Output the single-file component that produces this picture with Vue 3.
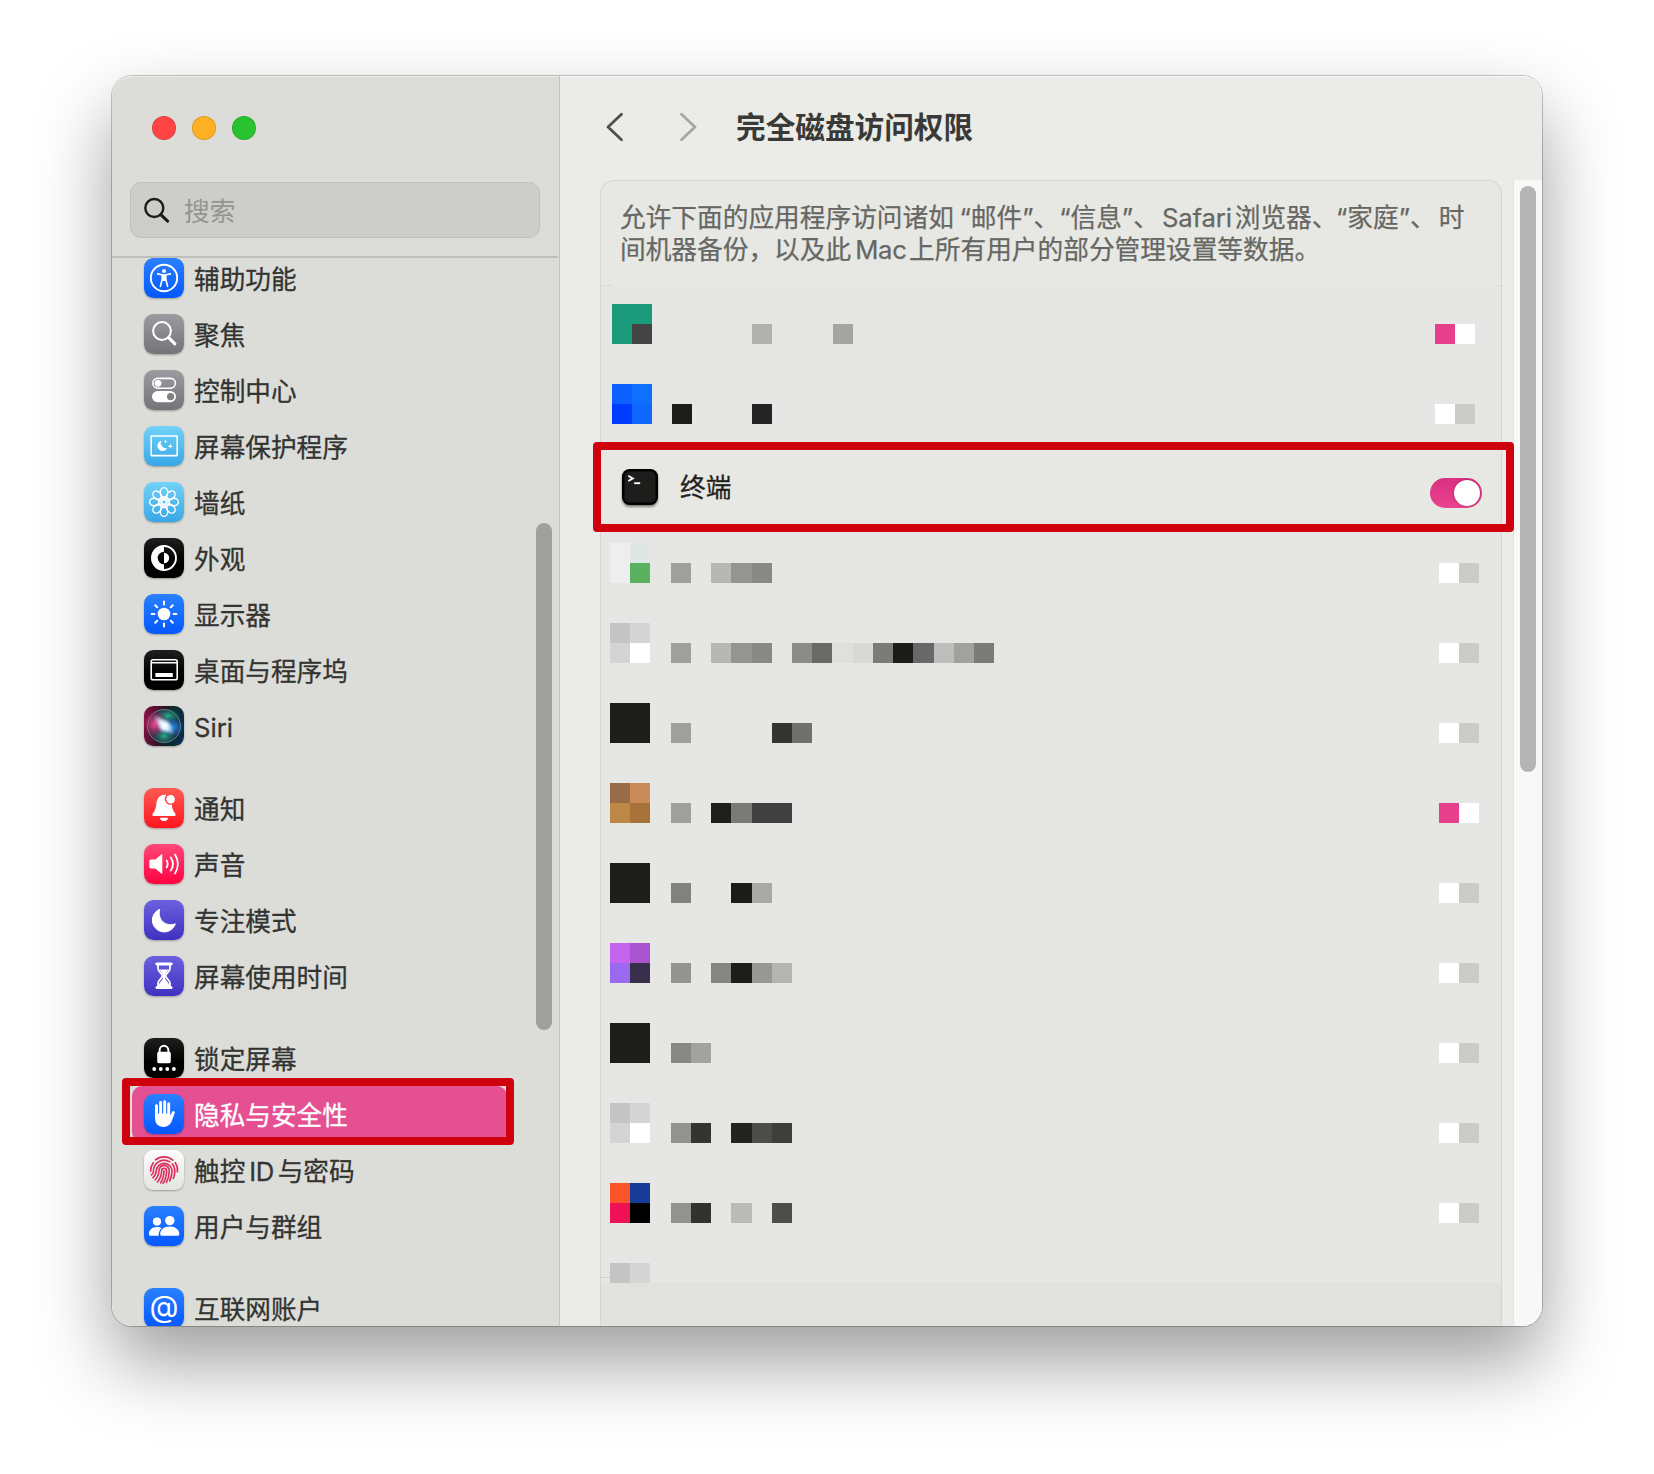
<script setup>
const W = 'fill="#fff"'
const S = 'fill="none" stroke="#fff" stroke-linecap="round" stroke-linejoin="round"'

const petals = Array.from({ length: 8 }, (_, i) =>
  `<ellipse cx="20" cy="10.2" rx="3.7" ry="4.6" transform="rotate(${i * 45} 20 20)"/><path d="M20 17.4 17.2 13.4M20 17.4l2.8-4" transform="rotate(${i * 45} 20 20)"/>`
).join('')

const rays = Array.from({ length: 8 }, (_, i) =>
  `<path d="M20 7.6v2.8" transform="rotate(${i * 45} 20 20)"/>`
).join('')

const glyphs = {
  access: `<circle cx="20" cy="20" r="13.2" ${S} stroke-width="1.9"/><circle cx="20" cy="12.9" r="2" ${W}/><path d="M13.6 15.9l4.7.9v4l-1.900 7.600M26.400 15.900l-4.700.9v4l1.900 7.600" ${S} stroke-width="1.6"/><path d="M17.600 16.300h4.800l-.2 5.200-1 1.600h-2.400l-1-1.600z" ${W}/>`,
  spotlight: `<circle cx="18" cy="17" r="8.9" ${S} stroke-width="2"/><path d="M24.6 23.6l6.3 6.3" ${S} stroke-width="3"/>`,
  control: `<rect x="8.8" y="8.4" width="22.6" height="9.8" rx="4.9" ${S} stroke-width="1.6"/><circle cx="14" cy="13.3" r="3.4" ${W}/><rect x="8" y="21" width="24" height="11.2" rx="5.6" ${W}/><circle cx="26.6" cy="26.6" r="3.6" fill="#808085"/>`,
  saver: `<rect x="7.2" y="10" width="26" height="19.6" ${S} stroke-width="1.6"/><path d="M17.2 14.8a5.2 5.2 0 1 0 6 7.4 5.4 5.4 0 0 1-6-7.4z" ${W}/><path d="M21.5 13.4l.5 1.6 1.6.5-1.6.5-.5 1.6-.5-1.6-1.6-.5 1.6-.5zM26.4 17.6l.7 2 2 .7-2 .7-.7 2-.7-2-2-.7 2-.7z" ${W}/>`,
  wallpaper: `<g ${S} stroke-width="1.4">${petals}<circle cx="20" cy="20" r="2.2"/></g>`,
  look: `<circle cx="20" cy="20" r="12" ${S} stroke-width="1.9"/><path d="M20 7.5a12.5 12.5 0 0 0 0 25v-6.2a6.3 6.3 0 0 1 0-12.6z" ${W}/><path d="M20 14.8a5.2 5.2 0 0 1 0 10.4z" ${W}/>`,
  display: `<circle cx="20" cy="20" r="6.3" ${W}/><g ${S} stroke-width="2">${rays}</g>`,
  dock: `<rect x="7.2" y="9.8" width="26" height="20" rx="1.8" ${S} stroke-width="1.6"/><path d="M7.4 12.8h25.6" stroke="#fff" stroke-width="1.5"/><rect x="11.4" y="23" width="17.4" height="4" rx=".6" ${W}/>`,
  siri: '',
  bell: `<path d="M22.6 6.9a5.7 5.7 0 0 0 5.2 9.7c.4 4 .9 5.8 3.1 8.3 1.4 1.7 1 3.1-.9 3.1H10c-1.9 0-2.3-1.4-.9-3.1 2.500-3 2.900-5.300 3.300-9.300.5-5 3.400-8.900 7.600-8.900z" ${W}/><circle cx="26.6" cy="11.3" r="4.3" ${W}/><path d="M15.8 29.7h8.4c-.5 2.2-2 3.4-4.2 3.400s-3.700-1.200-4.200-3.400z" ${W}/>`,
  sound: `<path d="M7 15.6h4.3l6-5.2c.5-.4 1-.2 1 .5v18.2c0 .7-.5.9-1 .5l-6-5.200H7c-1 0-1.700-.6-1.700-1.600v-5.600c0-1 .7-1.600 1.700-1.600z" ${W}/><path d="M22.6 16.400a7 7 0 0 1 0 7.200M26.800 13.400a12 12 0 0 1 0 13.200M31 10.600a17 17 0 0 1 0 18.800" ${S} stroke-width="1.8"/>`,
  moon: `<path d="M15.8 9.2a11.8 11.8 0 1 0 15.6 14.600c-9.600 3.600-18.600-4.400-15.600-14.600z" ${W} stroke="#fff" stroke-linejoin="round"/>`,
  hourglass: `<path d="M12.800 8h14.400M12.800 31.600h14.400" ${S} stroke-width="2.8"/><path d="M14 9v3.200c0 3.600 4.400 5.200 4.400 7.600s-4.400 4-4.400 7.600v3.400M26 9v3.200c0 3.600-4.400 5.200-4.400 7.600s4.400 4 4.400 7.600v3.400" ${S} stroke-width="1.8"/><path d="M15.600 13.600h8.800l-3.200 5v4.200l3.600 5 .6 3H14.600l.6-3 3.600-5v-4.200z" ${W}/>`,
  lock: `<rect x="13.2" y="13.8" width="13.6" height="11.4" rx="1.8" ${W}/><path d="M15.600 14.600v-2.400a4.400 4.400 0 0 1 8.800 0v2.400" ${S} stroke-width="2"/><g ${W}><circle cx="10.2" cy="31" r="1.9"/><circle cx="16.8" cy="31" r="1.9"/><circle cx="23.3" cy="31" r="1.9"/><circle cx="29.9" cy="31" r="1.9"/></g>`,
  hand: `<g ${S} stroke-width="2.9"><path d="M12.500 11.600v12M16.600 8.400v14M20.700 7.800v14M24.700 9.800v14M29.400 18.600l-3.200 6.600"/></g><path d="M11.050 19.500h15.100v2.300l2.300-2.100 1.600.8c-1.800 4.500-2.700 12.400-10.300 12.400-5.800 0-8.700-3.500-8.700-9z" ${W}/>`,
  touch: `<g fill="none" stroke="#dc2f5e" stroke-width="1.65" stroke-linecap="round"><path d="M11.500 9.900a13.500 13.500 0 0 1 17.400.3M31.200 12.600a13.500 13.500 0 0 1 2.200 9.200M6.600 21.300c-.1-3.200.9-6.200 2.700-8.600M9.400 21.600a10.700 10.700 0 0 1 16.400-9.700M28.300 13.900c3.400 4.100 3 9.600 1.100 14.500M7.300 24.900c1.300-.7 1.900-1.800 2.100-3.300M12.200 20.800a8 8 0 0 1 15.900-.5c0 3.800-.8 7.200-2.400 10.500M8.900 27.800c2.200-1.800 3.200-4 3.300-7M14.900 20.800a5.200 5.200 0 0 1 10.400-.4c0 4.300-.9 8.200-2.900 12M11 30c2.600-2.500 3.800-5.400 3.900-9.200M13.500 32c2.800-3.400 4.100-7 4.100-11.300a2.500 2.500 0 0 1 5 0c0 4.500-1.100 8.700-3.500 12.600M20 20.800c0 4.600-1.100 8.500-3.300 12"/></g>`,
  users: `<g ${W}><circle cx="13" cy="15.6" r="4.1"/><path d="M5 27.700c0-4 3.200-6.800 8-6.800 2 0 3.500.4 4.800 1.200-2 1.600-3.100 3.500-3.200 7.700H6.500c-1 0-1.500-.8-1.500-2.100z"/><circle cx="25.8" cy="14.6" r="4.7"/><path d="M16.200 27.800c0-4 3.600-7.300 9.500-7.300s9.600 3.300 9.600 7.300c0 1.400-.6 2-1.700 2H17.900c-1.100 0-1.700-.6-1.700-2z"/></g>`,
  at: ''
}

const groups = [
  [
    ['access', '辅助功能'], ['spotlight', '聚焦'], ['control', '控制中心'], ['saver', '屏幕保护程序'],
    ['wallpaper', '墙纸'], ['look', '外观'], ['display', '显示器'], ['dock', '桌面与程序坞'], ['siri', 'Siri']
  ],
  [['bell', '通知'], ['sound', '声音'], ['moon', '专注模式'], ['hourglass', '屏幕使用时间']],
  [['lock', '锁定屏幕'], ['hand', '隐私与安全性'], ['touch', '触控', 'ID', '与密码'], ['users', '用户与群组']],
  [['at', '互联网账户']]
]

const N = null
const on = ['#e63f8b', '#ffffff']
const off = ['#ffffff', '#cbccc8']
const solid = (c) => [c, c, c, c]
const pale = ['#c4c4c4', '#d5d5d5', '#d4d4d4', '#ffffff']

const upper = [
  { icon: ['#1a9b79', '#1a9b79', '#1a9b79', '#434545'], name: [N, N, N, N, '#b1b1b0', N, N, N, '#a4a4a3'], sw: on },
  { icon: ['#0c60ff', '#0f70ff', '#003cff', '#0f68ff'], name: ['#1c1c1b', N, N, N, '#242424'], sw: off }
]
const lower = [
  { icon: ['#eeeeee', '#e0e5e6', '#eeeeee', '#5ab25e'], name: ['#9f9f9d', N, '#b7b7b5', '#949492', '#888886'], sw: off },
  { icon: pale, name: ['#9f9f9d', N, '#b7b7b5', '#949492', '#888886', N, '#8b8b89', '#696968', '#dfe0dc', '#d8d9d4', '#7b7b7a', '#1b1b1a', '#686868', '#bdbdbb', '#a1a1a0', '#7b7b7a'], sw: off },
  { icon: solid('#1d1d1c'), name: ['#9f9f9d', N, N, N, N, '#343433', '#70706f'], sw: off },
  { icon: ['#996b47', '#cb8b58', '#bb8945', '#a87338'], name: ['#9f9f9d', N, '#1e1e1d', '#7a7a79', '#404040', '#404040'], sw: on },
  { icon: solid('#1d1d1c'), name: ['#81817f', N, N, '#1b1b1a', '#a9a9a7'], sw: off },
  { icon: ['#c464ee', '#ab54d0', '#9b68f0', '#38304b'], name: ['#939391', N, '#858583', '#1c1c1b', '#979796', '#b4b5b0'], sw: off },
  { icon: solid('#1d1d1c'), name: ['#878786', '#a2a2a1'], sw: off },
  { icon: pale, name: ['#929291', '#343433', N, '#232322', '#4c4c4b', '#3e3e3d'], sw: off },
  { icon: ['#fa5526', '#143c98', '#ee1156', '#000000'], name: ['#929291', '#323231', N, '#babbb6', N, '#4d4d4c'], sw: off },
  { icon: pale, name: [], sw: [] }
]
</script>

<template>
  <div class="desktop">
    <div class="window">
      <aside class="sidebar">
        <div class="lights"><i class="red"></i><i class="amber"></i><i class="green"></i></div>
        <div class="search">
          <svg width="28" height="28" viewBox="0 0 28 28" fill="none" stroke="#1b1b1a" stroke-width="2.4" stroke-linecap="round">
            <circle cx="12.3" cy="12" r="9" /><path d="M19 18.8l6.6 6.4" stroke-width="3" />
          </svg>
          <span>搜索</span>
        </div>
        <nav class="nav">
          <ul v-for="(g, gi) in groups" :key="gi" class="group">
            <li v-for="item in g" :key="item[0]" class="item" :class="{ selected: item[0] === 'hand' }">
              <span class="tile" :class="item[0]">
                <span v-if="item[0] === 'at'" class="at-sign">@</span>
                <svg v-else-if="item[0] === 'siri'" width="40" height="40" viewBox="0 0 40 40">
                  <defs>
                    <radialGradient id="glow"><stop offset="0" stop-color="#fff" /><stop offset=".3" stop-color="#eef8ff" stop-opacity=".95" /><stop offset="1" stop-color="#bcd8ff" stop-opacity="0" /></radialGradient>
                    <radialGradient id="pink"><stop offset="0" stop-color="#f0508c" /><stop offset="1" stop-color="#c01a60" stop-opacity="0" /></radialGradient>
                    <radialGradient id="blue"><stop offset="0" stop-color="#2d9cf0" /><stop offset="1" stop-color="#1560c8" stop-opacity="0" /></radialGradient>
                    <radialGradient id="teal"><stop offset="0" stop-color="#25b08c" /><stop offset="1" stop-color="#157a66" stop-opacity="0" /></radialGradient>
                  </defs>
                  <circle cx="20" cy="20" r="16.5" fill="#2a3a58" fill-opacity=".7" stroke="#6f9ba6" stroke-opacity=".8" stroke-width="1" />
                  <ellipse cx="24" cy="10" rx="13" ry="8" fill="url(#teal)" />
                  <ellipse cx="11" cy="18" rx="13" ry="14" fill="url(#pink)" />
                  <ellipse cx="28" cy="21" rx="12" ry="10" fill="url(#blue)" />
                  <ellipse cx="20" cy="30" rx="11" ry="8" fill="url(#teal)" />
                  <ellipse cx="20" cy="19" rx="14" ry="5.5" transform="rotate(42 20 19)" fill="url(#glow)" />
                  <circle cx="20.5" cy="20" r="8" fill="url(#glow)" />
                </svg>
                <svg v-else width="40" height="40" viewBox="0 0 40 40" v-html="glyphs[item[0]]"></svg>
              </span>
              <span class="label">{{ item[1] }}<span v-if="item[2]" class="latin">{{ item[2] }}</span>{{ item[3] }}</span>
            </li>
          </ul>
        </nav>
        <div class="side-thumb"></div>
        <div class="mark mark-side"></div>
      </aside>

      <main class="main">
        <header class="bar">
          <svg width="20" height="32" viewBox="0 0 20 32" fill="none" stroke="#50504e" stroke-width="2.8" stroke-linecap="round" stroke-linejoin="round"><path d="M16.500 3.200L3 16l13.500 12.800" /></svg>
          <svg class="fwd" width="20" height="32" viewBox="0 0 20 32" fill="none" stroke="#a6a6a3" stroke-width="2.8" stroke-linecap="round" stroke-linejoin="round"><path d="M3.500 3.200L17 16 3.500 28.800" /></svg>
          <h1>完全磁盘访问权限</h1>
        </header>
        <div class="body">
          <section class="card">
            <p class="intro">
              <span class="line">允许下面的应用程序访问诸如<q class="gap">“</q>邮件<q>”</q>、<q>“</q>信息<q>”</q>、<b class="safari">Safari</b>浏览器、<q class="tight">“</q>家庭<q>”</q>、<span class="wide">时</span></span>
              <span class="line">间机器备份，以及此<b>Mac</b>上所有用户的部分管理设置等数据。</span>
            </p>
            <div class="list">
              <div v-for="(r, i) in upper" :key="'u' + i" class="row upper">
                <div class="quad"><i v-for="(c, k) in r.icon" :key="k" :style="{ background: c }"></i></div>
                <div class="strip"><i v-for="(c, k) in r.name" :key="k" :style="{ background: c || 'transparent' }"></i></div>
                <div class="strip end"><i v-for="(c, k) in r.sw" :key="k" :style="{ background: c }"></i></div>
              </div>
              <div class="terminal">
                <svg class="term-icon" width="36" height="36" viewBox="0 0 36 36"><rect width="36" height="36" rx="7.5" fill="#000" /><rect x="2.5" y="2.5" width="31" height="31" rx="5" fill="#1d1d1c" /><path d="M6.300 6.800l4.600 2.600-4.600 2.600" fill="none" stroke="#fff" stroke-width="1.8" /><path d="M12.200 14.200h6" stroke="#fff" stroke-width="1.9" /></svg>
                <span class="term-name">终端</span>
                <span class="toggle"><i></i></span>
                <div class="mark mark-row"></div>
              </div>
              <div v-for="(r, i) in lower" :key="'l' + i" class="row">
                <div class="quad"><i v-for="(c, k) in r.icon" :key="k" :style="{ background: c }"></i></div>
                <div class="strip"><i v-for="(c, k) in r.name" :key="k" :style="{ background: c || 'transparent' }"></i></div>
                <div class="strip end"><i v-for="(c, k) in r.sw" :key="k" :style="{ background: c }"></i></div>
              </div>
            </div>
            <div class="foot"></div>
          </section>
          <div class="track"><div class="thumb"></div></div>
        </div>
      </main>
    </div>
  </div>
</template>

<style>
body { margin: 0; background: #fff; }
</style>

<style scoped>
* { box-sizing: border-box; }
.desktop {
  width: 1654px; height: 1474px; padding: 76px 112px 0; overflow: hidden; background: #fff;
  font-family: Inter, "Noto Sans CJK SC", sans-serif; font-size: 25.65px; color: #333431;
}
.window {
  display: flex; width: 1430px; height: 1250px; border-radius: 20px; position: relative;
  box-shadow: 0 0 0 1px rgba(0, 0, 0, .22), 0 36px 76px rgba(0, 0, 0, .39);
}
.sidebar {
  position: relative; width: 448px; height: 1250px; background: #dcddd8; border-right: 1px solid #c3c4bf;
  border-radius: 20px 0 0 20px; display: flex; flex-direction: column; flex: none;
  box-shadow: inset 0 1px 0 #f0f0ed;
}
.lights { display: flex; gap: 16px; padding: 40px 0 0 40px; height: 106px; flex: none; }
.lights i { width: 24px; height: 24px; border-radius: 50%; border: 1px solid rgba(0, 0, 0, .12); }
.red { background: #ff4645; }
.amber { background: #ffb024; }
.green { background: #2ac231; }
.search {
  margin-left: 18px; width: 410px; height: 56px; border-radius: 11px; background: #cdcec9; border: 1px solid #c0c1bc;
  display: flex; align-items: center; padding: 0 0 1px 11px; gap: 14px; color: #94958f; flex: none;
}
.nav { margin-top: 18px; border-top: 2px solid #bebfba; flex: 1; min-height: 0; overflow: hidden; border-bottom-left-radius: 20px; width: 446px; }
.group { list-style: none; margin: 0 0 26px; padding: 0 0 0 20px; }
.item { display: flex; align-items: center; height: 56px; width: 375px; padding-left: 12px; gap: 10px; border-radius: 10px; }
.group:first-child { margin-top: -8px; }
.item.selected { background: #e55093; color: #fff; }
.label { white-space: nowrap; line-height: 38px; padding-top: 3px; -webkit-text-stroke: .3px currentColor; }
.latin { margin: 0 4px; letter-spacing: -.5px; }
.tile { width: 40px; height: 40px; border-radius: 9.5px; flex: none; overflow: hidden; display: block; box-shadow: 0 1px 2px rgba(0, 0, 0, .3); }
.tile svg { display: block; }
.access, .display, .hand, .users, .at { background: linear-gradient(#2a80ff, #0458ff); }
.spotlight, .control { background: linear-gradient(#9c9ca0, #737378); }
.saver, .wallpaper { background: linear-gradient(#72d2f8, #38a7e6); }
.look, .dock, .lock { background: linear-gradient(#1e1e1e, #000 60%); }
.siri { background: linear-gradient(100deg, #8c0f42, #2a1426 45%, #0b2a28 65%, #0a2c55); }
.bell { background: linear-gradient(#ff5a52, #ff1520); }
.sound { background: linear-gradient(#ff4878, #ff0340); }
.moon, .hourglass { background: linear-gradient(#6a60de, #4032c0); }
.touch { background: linear-gradient(#fdfdfd, #e4e4e2); }
.at-sign { display: block; color: #fff; font-size: 30px; line-height: 36px; text-align: center; margin: 0 -4px; }
.side-thumb { position: absolute; left: 424px; top: 447px; width: 16px; height: 507px; border-radius: 8px; background: #a0a19d; }
.mark { position: absolute; border: 8px solid #d0010f; border-radius: 4px; z-index: 3; }
.mark-side { left: 10px; top: 1002px; width: 392px; height: 67px; }

.main { flex: 1; display: flex; flex-direction: column; background: #ebece7; border-radius: 0 20px 20px 0; min-width: 0; box-shadow: inset 0 1px 0 #fafaf8; }
.bar { height: 104px; flex: none; display: flex; align-items: center; padding: 0 0 2px 45px; }
.fwd { margin-left: 53px; }
.bar h1 { margin: 0 0 0 38px; font-size: 29.65px; line-height: 40px; font-weight: 700; color: #393a37; }
.body { flex: 1; display: flex; min-height: 0; padding-left: 40px; }
.card { width: 902px; border: 1px solid #d5d6d2; border-bottom: 0; border-radius: 14px 14px 0 0; background: #e7e8e3; display: flex; flex-direction: column; }
.intro { margin: 0; padding: 20.5px 0 0 19px; height: 104px; flex: none; color: #666763; font-size: 25.7px; -webkit-text-stroke: .25px currentColor; }
.line { display: block; white-space: nowrap; line-height: 32.5px; height: 32.5px; }
.line b { font-weight: 400; margin: 0 2.5px 0 4px; letter-spacing: -.3px; }
.line b.safari { margin: 0 3px; letter-spacing: -.15px; }
.line q { quotes: none; }
.line q::before, .line q::after { content: none; }
.line q.gap { margin-left: 5.5px; }
.line q.tight { margin-left: -1.5px; }
.wide { margin-left: 3px; }
.list {
  height: 998px; flex: none; border-top: 2px solid transparent;
  background:
    linear-gradient(#d9dad6, #d9dad6) 0 0 / 11px 1px no-repeat border-box,
    linear-gradient(#d9dad6, #d9dad6) 100% 0 / 5px 1px no-repeat border-box,
    linear-gradient(#cfd0cc, #cfd0cc) 0 992px / 9px 1px no-repeat border-box,
    #e6e7e5;
}
.row { height: 80px; display: flex; padding: 17px 22px 0 9px; }
.row:last-child { height: 37px; overflow: hidden; }
.upper { padding-left: 11px; padding-right: 26px; --cell: 20.05px; }
.quad { display: grid; grid-template-columns: repeat(2, var(--cell, 20.22px)); grid-auto-rows: 20px; margin-right: var(--cell, 20.22px); height: 40px; }
.strip { display: flex; height: 20px; margin-top: 20px; }
.strip i { width: var(--cell, 20.22px); height: 20px; flex: none; }
.end { margin-left: auto; }
.terminal { height: 79px; display: flex; align-items: center; padding: 2px 19px 0 21px; position: relative; background: #e7e8e3; color: #1f1f1e; }
.term-icon { margin-top: -1px; filter: drop-shadow(0 2px 1px rgba(0, 0, 0, .45)); }
.term-name { margin-left: 22px; line-height: 38px; -webkit-text-stroke: .3px currentColor; }
.toggle { margin-left: auto; margin-top: 10px; width: 52px; height: 30px; border-radius: 15px; background: linear-gradient(#db2f80, #e8448f); display: flex; justify-content: flex-end; padding: 2px; }
.toggle i { width: 26px; height: 26px; border-radius: 50%; background: #fff; box-shadow: 0 0 2px rgba(90, 0, 50, .6); }
.mark-row { left: -8px; top: -5px; width: 921px; height: 90px; }
.foot { flex: 1; background: #e1e2dd; }
.track { margin-left: 11px; width: 29px; border-left: 1px solid #e0e1de; background: #f8f8f8; padding: 6px 0 0 6px; border-bottom-right-radius: 20px; }
.thumb { width: 16px; height: 586px; border-radius: 8px; background: #b5b5b5; }
</style>
